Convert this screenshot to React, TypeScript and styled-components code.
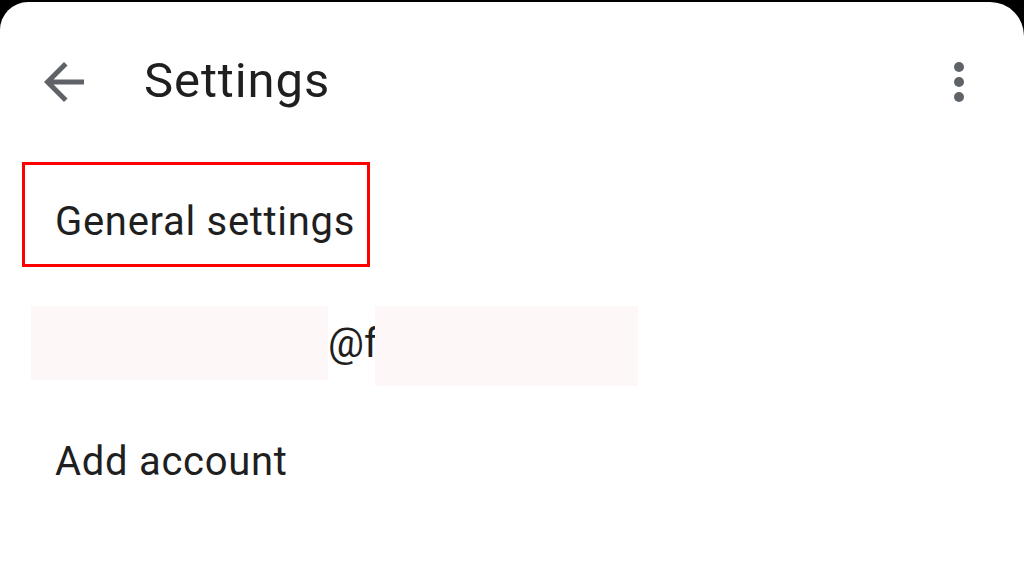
import React from "react";
import styled, { createGlobalStyle } from "styled-components";

const Global = createGlobalStyle`
  html, body {
    margin: 0;
    padding: 0;
    background: #000;
    width: 1024px;
    height: 575px;
    overflow: hidden;
  }
  * { box-sizing: border-box; }
`;

const Screen = styled.div`
  margin-top: 2px;
  width: 1024px;
  height: 573px;
  background: #ffffff;
  border-radius: 28px 34px 0 0;
  font-family: Roboto, "Noto Sans", Arial, sans-serif;
  color: #1f1f1f;
  display: flex;
  flex-direction: column;
`;

const Header = styled.header`
  height: 160px;
  display: flex;
  align-items: center;
  padding: 0 35px 0 34px;
`;

const IconButton = styled.div`
  width: 60px;
  height: 60px;
  display: flex;
  align-items: center;
  justify-content: center;
  color: #5f6368;
  flex: none;
`;

const Title = styled.h1`
  margin: 0 0 0 50px;
  font-size: 49px;
  font-weight: 400;
  letter-spacing: 0.9px;
  flex: 1;
  line-height: 1;
  padding-bottom: 4px;
`;

const List = styled.div`
  display: flex;
  flex-direction: column;
`;

const Row = styled.div`
  position: relative;
  height: 120px;
  display: flex;
  align-items: center;
  padding-left: 55px;
  font-size: 40px;
  letter-spacing: 0.7px;
  line-height: 1;
`;

const Highlight = styled.div`
  position: absolute;
  left: 22px;
  top: 0;
  width: 348px;
  height: 105px;
  border: 3px solid #ff0000;
  pointer-events: none;
`;

const AccountRow = styled.div`
  height: 120px;
  display: flex;
  align-items: flex-start;
  padding: 24px 0 0 31px;
  font-size: 40px;
  line-height: 1;
`;

const Redacted = styled.div<{ $w: number; $h: number }>`
  width: ${(p) => p.$w}px;
  height: ${(p) => p.$h}px;
  background: #fdf8f7;
  flex: none;
`;

const Domain = styled.span`
  width: 47px;
  flex: none;
  align-self: flex-start;
  margin-top: 18px;
`;

const BackIcon = () => (
  <svg width="60" height="60" viewBox="0 0 24 24" fill="currentColor">
    <path d="M20 11H7.83l5.59-5.59L12 4l-8 8 8 8 1.41-1.41L7.83 13H20v-2z" />
  </svg>
);

const MoreIcon = () => (
  <svg width="60" height="60" viewBox="0 0 24 24" fill="currentColor">
    <circle cx="12" cy="6" r="2" />
    <circle cx="12" cy="12" r="2" />
    <circle cx="12" cy="18" r="2" />
  </svg>
);

export default function App() {
  return (
    <>
      <Global />
      <Screen>
        <Header>
          <IconButton>
            <BackIcon />
          </IconButton>
          <Title>Settings</Title>
          <IconButton>
            <MoreIcon />
          </IconButton>
        </Header>
        <List>
          <Row>
            General settings
            <Highlight />
          </Row>
          <AccountRow>
            <Redacted $w={297} $h={74} />
            <Domain>@f</Domain>
            <Redacted $w={263} $h={80} />
          </AccountRow>
          <Row>Add account</Row>
        </List>
      </Screen>
    </>
  );
}
